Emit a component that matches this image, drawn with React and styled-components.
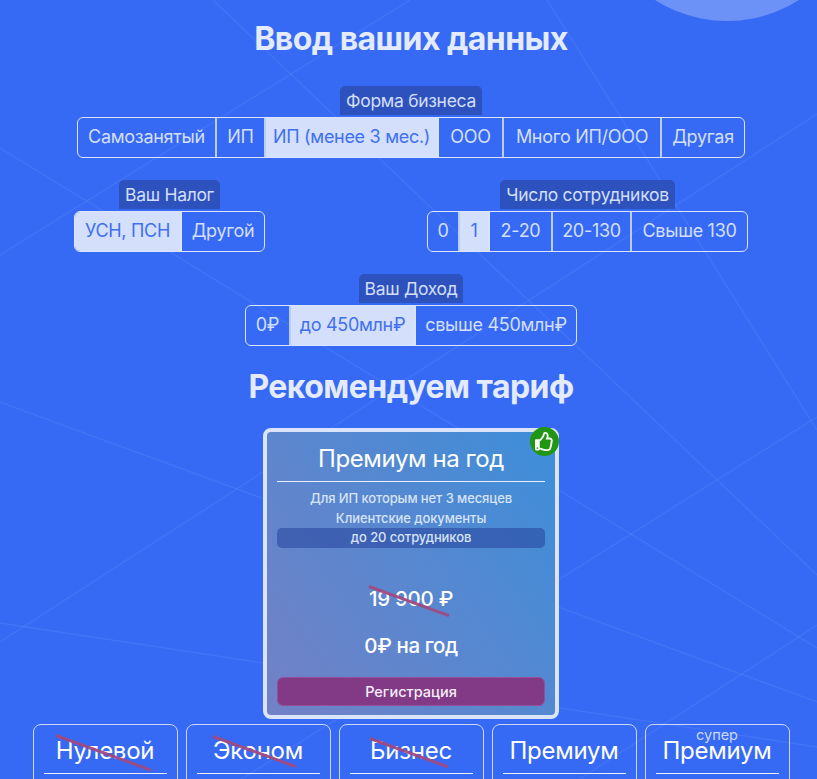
import React from "react";
import styled, { createGlobalStyle } from "styled-components";
import { FaRegThumbsUp } from "react-icons/fa";

const Global = createGlobalStyle`
 html, body {
  margin: 0;
  height: 100%;
  overflow: hidden;
  background: #366af5;
 }
 * {
  box-sizing: border-box;
 }
`;

const Page = styled.div`
 position: relative;
 width: 817px;
 height: 779px;
 overflow: hidden;
 background: #366af5;
 font-family: "Inter", "Noto Sans", sans-serif;
 color: #dfe8fe;
`;

const Lines = styled.svg`
 position: absolute;
 inset: 0;
 width: 817px;
 height: 779px;
`;

const Moon = styled.div`
 position: absolute;
 left: 593px;
 top: -247px;
 width: 268px;
 height: 268px;
 border-radius: 50%;
 background: #6c92f7;
`;

const Content = styled.div`
 position: relative;
 width: 822px;
 padding-top: 21px;
 display: flex;
 flex-direction: column;
 align-items: center;
`;

const Title = styled.h1`
 margin: 0;
 font-size: 32px;
 line-height: 36px;
 font-weight: 700;
 letter-spacing: -0.55px;
 color: #e4ebff;
 text-align: center;
`;

const Group = styled.div`
 display: flex;
 flex-direction: column;
 align-items: center;
`;

const Label = styled.div`
 height: 29px;
 padding: 0 6px;
 margin-bottom: 2px;
 border-radius: 5px 5px 0 0;
 background: #2e52bd;
 color: #d3dffb;
 font-size: 17.5px;
 line-height: 30px;
 letter-spacing: -0.3px;
 white-space: nowrap;
`;

const Segments = styled.div`
 display: flex;
 height: 41px;
 border: 1px solid #dbe5fe;
 border-radius: 6px;
 overflow: hidden;
`;

const Segment = styled.div`
 width: ${(p) => p.$w}px;
 border-right: 2px solid rgba(219, 229, 254, 0.8);
 background: ${(p) => (p.$active ? "#d3dffb" : "transparent")};
 color: ${(p) => (p.$active ? "#4070f0" : "#d3dffb")};
 font-size: 18px;
 line-height: 38px;
 font-weight: 400;
 letter-spacing: -0.3px;
 text-align: center;
 white-space: nowrap;

 &:last-child {
  border-right: none;
 }
`;

const FirstGroup = styled(Group)`
 margin-top: 29px;
`;

const MiddleRow = styled.div`
 align-self: stretch;
 display: flex;
 justify-content: space-between;
 margin-top: 22px;
 padding: 0 74px;
`;

const IncomeGroup = styled(Group)`
 margin-top: 22px;
`;

const SecondTitle = styled(Title)`
 margin-top: 23px;
`;

const Card = styled.div`
 position: relative;
 width: 296px;
 height: 291px;
 margin-top: 23px;
 padding: 12px 10px 0;
 border: 4px solid #dbe5fa;
 border-radius: 8px;
 background: linear-gradient(
  55deg,
  rgba(118, 130, 195, 0.95),
  rgba(62, 144, 216, 0.95)
 );
 display: flex;
 flex-direction: column;
`;

const Badge = styled.div`
 position: absolute;
 top: -5px;
 right: -4px;
 width: 29px;
 height: 29px;
 border-radius: 50%;
 background: #219613;
 color: #fff;
 display: flex;
 align-items: center;
 justify-content: center;
 font-size: 19px;
`;

const CardName = styled.div`
 margin-bottom: 6px;
 padding-bottom: 7px;
 border-bottom: 1px solid #e8eefc;
 color: #fff;
 font-size: 24px;
 line-height: 30px;
 text-align: center;
 letter-spacing: -0.4px;
`;

const CardLine = styled.div`
 height: 20px;
 color: #d7e3f8;
 font-size: 13px;
 font-weight: 500;
 line-height: 20px;
 text-align: center;
 letter-spacing: -0.1px;
`;

const CardPill = styled.div`
 height: 20px;
 border-radius: 5px;
 background: rgba(42, 72, 160, 0.6);
 color: #d7e3f8;
 font-size: 13px;
 font-weight: 500;
 line-height: 19px;
 text-align: center;
 letter-spacing: -0.1px;
`;

const Struck = styled.span`
 position: relative;
 display: inline-block;

 &::after {
  content: "";
  position: absolute;
  left: 0;
  top: 50%;
  width: ${(p) => p.$len}px;
  height: 3px;
  background: #a04a80;
  opacity: 0.95;
  transform-origin: left center;
  transform: translateY(${(p) => p.$dy}px) rotate(20deg);
 }
`;

const OldPrice = styled.div`
 margin-top: 37px;
 color: #fff;
 font-size: 20.5px;
 line-height: 28px;
 font-weight: 500;
 text-align: center;
 letter-spacing: -0.3px;
`;

const Price = styled.div`
 margin-top: 19px;
 color: #fff;
 font-size: 20.5px;
 line-height: 28px;
 font-weight: 500;
 text-align: center;
 letter-spacing: -0.4px;
`;

const Register = styled.div`
 margin-top: 17px;
 height: 29px;
 border: 1px solid #96509a;
 border-radius: 6px;
 background: #823a87;
 color: #f5eef8;
 font-size: 14.5px;
 font-weight: 500;
 line-height: 27px;
 text-align: center;
`;

const Tabs = styled.div`
 display: flex;
 gap: 8px;
 margin-top: 5px;
`;

const Tab = styled.div`
 position: relative;
 width: 145px;
 height: 70px;
 padding: 0 10px;
 border: 1px solid #c9d8fc;
 border-radius: 8px;
`;

const TabName = styled.div`
 height: 49px;
 border-bottom: 1px solid #e8eefc;
 color: #fff;
 font-size: 24px;
 line-height: 52px;
 text-align: center;
 letter-spacing: -0.25px;
`;

const Super = styled.span`
 position: absolute;
 left: 0;
 right: 0;
 top: 2px;
 color: #c9d8fc;
 font-size: 14.5px;
 line-height: 16px;
 text-align: center;
`;

const business = [
 ["Самозанятый", 139],
 ["ИП", 49],
 ["ИП (менее 3 мес.)", 173, true],
 ["ООО", 65],
 ["Много ИП/ООО", 158],
 ["Другая", 82],
];
const tax = [
 ["УСН, ПСН", 107, true],
 ["Другой", 82],
];
const staff = [
 ["0", 32],
 ["1", 30, true],
 ["2-20", 63],
 ["20-130", 79],
 ["Свыше 130", 115],
];
const income = [
 ["0₽", 45],
 ["до 450млн₽", 125, true],
 ["свыше 450млн₽", 160],
];

const segmentsOf = (items) => (
 <Segments>
  {items.map(([text, w, active]) => (
   <Segment key={text} $w={w} $active={active}>
    {text}
   </Segment>
  ))}
 </Segments>
);

// faint crossing lines behind everything
const background = [
 [0, 402, 817, 702],
 [0, 642, 817, 114],
 [0, 623, 817, 747],
 [817, 417, 240, 780],
 [547, 0, 817, 430],
 [213, 0, 817, 575],
 [410, 0, 0, 255],
 [0, 148, 817, 648],
 [817, 625, 580, 779],
];

export default function App() {
 return (
  <Page>
   <Global />
   <Lines viewBox="0 0 817 779">
    {background.map(([x1, y1, x2, y2]) => (
     <line
      key={`${x1}-${y1}-${x2}`}
      x1={x1}
      y1={y1}
      x2={x2}
      y2={y2}
      stroke="#fff"
      strokeOpacity="0.07"
      strokeWidth="1.3"
     />
    ))}
   </Lines>
   <Moon />
   <Content>
    <Title>Ввод ваших данных</Title>
    <FirstGroup>
     <Label>Форма бизнеса</Label>
     {segmentsOf(business)}
    </FirstGroup>
    <MiddleRow>
     <Group>
      <Label>Ваш Налог</Label>
      {segmentsOf(tax)}
     </Group>
     <Group>
      <Label>Число сотрудников</Label>
      {segmentsOf(staff)}
     </Group>
    </MiddleRow>
    <IncomeGroup>
     <Label>Ваш Доход</Label>
     {segmentsOf(income)}
    </IncomeGroup>
    <SecondTitle>Рекомендуем тариф</SecondTitle>
    <Card>
     <Badge>
      <FaRegThumbsUp />
     </Badge>
     <CardName>Премиум на год</CardName>
     <CardLine>Для ИП которым нет 3 месяцев</CardLine>
     <CardLine>Клиентские документы</CardLine>
     <CardPill>до 20 сотрудников</CardPill>
     <OldPrice>
      <Struck $len={85} $dy={-14}>19 900 ₽</Struck>
     </OldPrice>
     <Price>0₽ на год</Price>
     <Register>Регистрация</Register>
    </Card>
    <Tabs>
     <Tab>
      <TabName>
       <Struck $len={101} $dy={-17}>Нулевой</Struck>
      </TabName>
     </Tab>
     <Tab>
      <TabName>
       <Struck $len={88} $dy={-16}>Эконом</Struck>
      </TabName>
     </Tab>
     <Tab>
      <TabName>
       <Struck $len={83} $dy={-14}>Бизнес</Struck>
      </TabName>
     </Tab>
     <Tab>
      <TabName>Премиум</TabName>
     </Tab>
     <Tab>
      <Super>супер</Super>
      <TabName>Премиум</TabName>
     </Tab>
    </Tabs>
   </Content>
  </Page>
 );
}
